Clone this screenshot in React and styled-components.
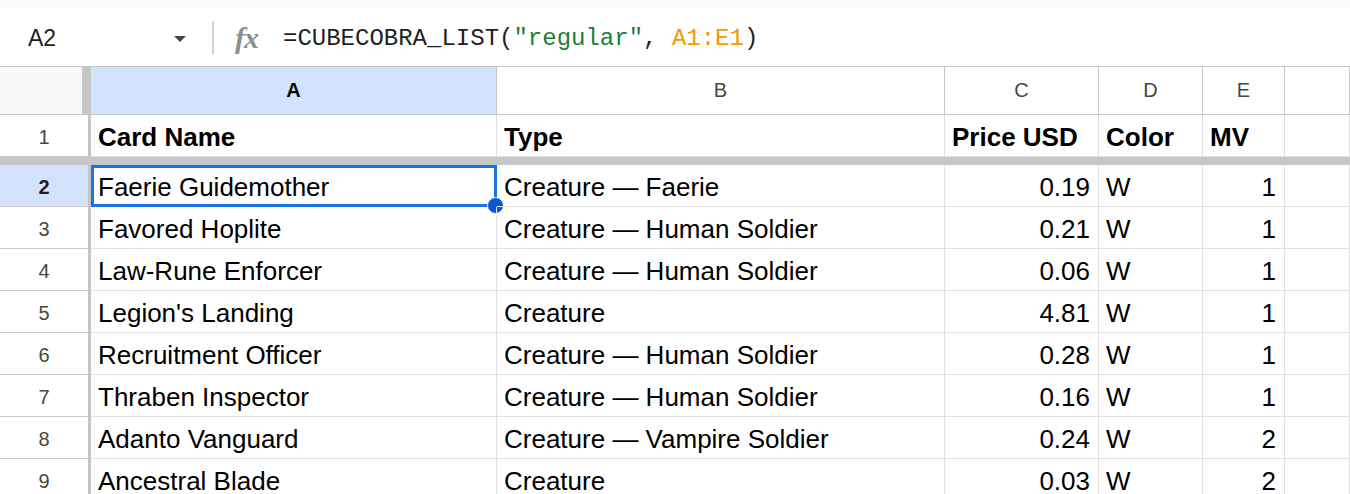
import React from 'react';
import styled, { createGlobalStyle } from 'styled-components';

const GlobalStyle = createGlobalStyle`
	html, body {
		margin: 0;
		padding: 0;
		background: #fff;
		overflow: hidden;
	}
	body {
		font-family: "Liberation Sans", Arial, sans-serif;
		color: #000;
	}
`;

const COLS = '91px 406px 448px 154px 104px 82px 1fr';

const Page = styled.div`
	width: 1350px;
	height: 494px;
	overflow: hidden;
	display: flex;
	flex-direction: column;
`;

const TopStrip = styled.div`
	height: 9px;
	flex: none;
	background: #f9fbfd;
`;

const FormulaBar = styled.div`
	height: 57px;
	flex: none;
	display: flex;
	align-items: center;
	border-bottom: 1px solid #c4c7c5;
`;

const NameBox = styled.div`
	width: 212px;
	box-sizing: border-box;
	padding: 2px 25px 0 28px;
	display: flex;
	align-items: center;
	justify-content: space-between;
	font-size: 23px;
	color: #1f1f1f;
`;

const Divider = styled.div`
	width: 2px;
	height: 33px;
	background: #d3d3d3;
`;

const Fx = styled.span`
	display: inline-block;
	width: 29px;
	margin: 0 19px 0 21px;
	font-family: "Liberation Serif", "Times New Roman", serif;
	font-style: italic;
	font-weight: 700;
	font-size: 30px;
	color: #8b8e91;
	letter-spacing: -1px;
`;

const Formula = styled.div`
	padding-top: 2px;
	font-family: "Liberation Mono", "Courier New", monospace;
	font-size: 24px;
	color: #1f1f1f;
	white-space: pre;
`;

const Str = styled.span`
	color: #188038;
`;

const Ref = styled.span`
	color: #f29900;
`;

const Row = styled.div`
	display: grid;
	grid-template-columns: ${COLS};
	height: ${p => p.$h}px;
	flex: none;
`;

const Corner = styled.div`
	background: #f8f9fa;
	border-right: 9px solid #c7c7c7;
	border-bottom: 1px solid #c4c7c5;
`;

const ColHead = styled.div`
	display: flex;
	align-items: center;
	justify-content: center;
	font-size: 20px;
	color: #444746;
	font-weight: ${p => (p.$active ? 700 : 400)};
	background: ${p => (p.$active ? '#d3e3fd' : '#fff')};
	border-right: 1px solid #c4c7c5;
	border-bottom: 1px solid #c4c7c5;
	${p => p.$active && 'color: #0b0b0b;'}
`;

const RowHead = styled.div`
	display: flex;
	align-items: center;
	justify-content: center;
	padding-top: 3px;
	font-size: 20px;
	color: ${p => (p.$active ? '#1f1f1f' : '#444746')};
	font-weight: ${p => (p.$active ? 700 : 400)};
	background: ${p => (p.$active ? '#d3e3fd' : '#fff')};
	border-right: 3px solid #c4c7c5;
	border-bottom: 1px solid #c4c7c5;
`;

const Cell = styled.div`
	position: relative;
	display: flex;
	align-items: center;
	justify-content: ${p => (p.$num ? 'flex-end' : 'flex-start')};
	padding: 3px 8px 0 7px;
	font-size: 26px;
	font-weight: ${p => (p.$bold ? 700 : 400)};
	white-space: nowrap;
	border-right: 1px solid #e1e1e1;
	border-bottom: 1px solid #e1e1e1;
	min-width: 0;
`;

const FreezeBar = styled.div`
	height: 8px;
	flex: none;
	background: #c7c7c7;
`;

const Selection = styled.div`
	position: absolute;
	left: 0;
	top: 0;
	right: -1px;
	bottom: -1px;
	border: 3px solid #1a73e8;
	pointer-events: none;
`;

const Handle = styled.div`
	position: absolute;
	right: -10px;
	bottom: -10px;
	width: 15px;
	height: 15px;
	border-radius: 50%;
	background: #0b57d0;
	border: 1px solid #fff;
`;

const Caret = () => (
	<svg width="14" height="8" viewBox="0 0 14 8">
		<path d="M1 1 L13 1 L7 7 Z" fill="#444746" />
	</svg>
);

const headers = ['A', 'B', 'C', 'D', 'E', ''];

const rows = [
	['Faerie Guidemother', 'Creature — Faerie', '0.19', 'W', '1'],
	['Favored Hoplite', 'Creature — Human Soldier', '0.21', 'W', '1'],
	['Law-Rune Enforcer', 'Creature — Human Soldier', '0.06', 'W', '1'],
	["Legion's Landing", 'Creature', '4.81', 'W', '1'],
	['Recruitment Officer', 'Creature — Human Soldier', '0.28', 'W', '1'],
	['Thraben Inspector', 'Creature — Human Soldier', '0.16', 'W', '1'],
	['Adanto Vanguard', 'Creature — Vampire Soldier', '0.24', 'W', '2'],
	['Ancestral Blade', 'Creature', '0.03', 'W', '2'],
];

export default function App() {
	return (
		<Page>
			<GlobalStyle />
			<TopStrip />
			<FormulaBar>
				<NameBox>
					<span>A2</span>
					<Caret />
				</NameBox>
				<Divider />
				<Fx>fx</Fx>
				<Formula>
					=CUBECOBRA_LIST(<Str>"regular"</Str>, <Ref>A1:E1</Ref>)
				</Formula>
			</FormulaBar>

			<Row $h={48}>
				<Corner />
				{headers.map((h, i) => (
					<ColHead key={i} $active={h === 'A'}>
						{h}
					</ColHead>
				))}
			</Row>

			<Row $h={42}>
				<RowHead>1</RowHead>
				<Cell $bold>Card Name</Cell>
				<Cell $bold>Type</Cell>
				<Cell $bold>Price USD</Cell>
				<Cell $bold>Color</Cell>
				<Cell $bold>MV</Cell>
				<Cell />
			</Row>
			<FreezeBar />

			{rows.map((r, i) => (
				<Row $h={42} key={i}>
					<RowHead $active={i === 0}>{i + 2}</RowHead>
					<Cell>
						{r[0]}
						{i === 0 && (
							<Selection>
								<Handle />
							</Selection>
						)}
					</Cell>
					<Cell>{r[1]}</Cell>
					<Cell $num>{r[2]}</Cell>
					<Cell>{r[3]}</Cell>
					<Cell $num>{r[4]}</Cell>
					<Cell />
				</Row>
			))}
		</Page>
	);
}
